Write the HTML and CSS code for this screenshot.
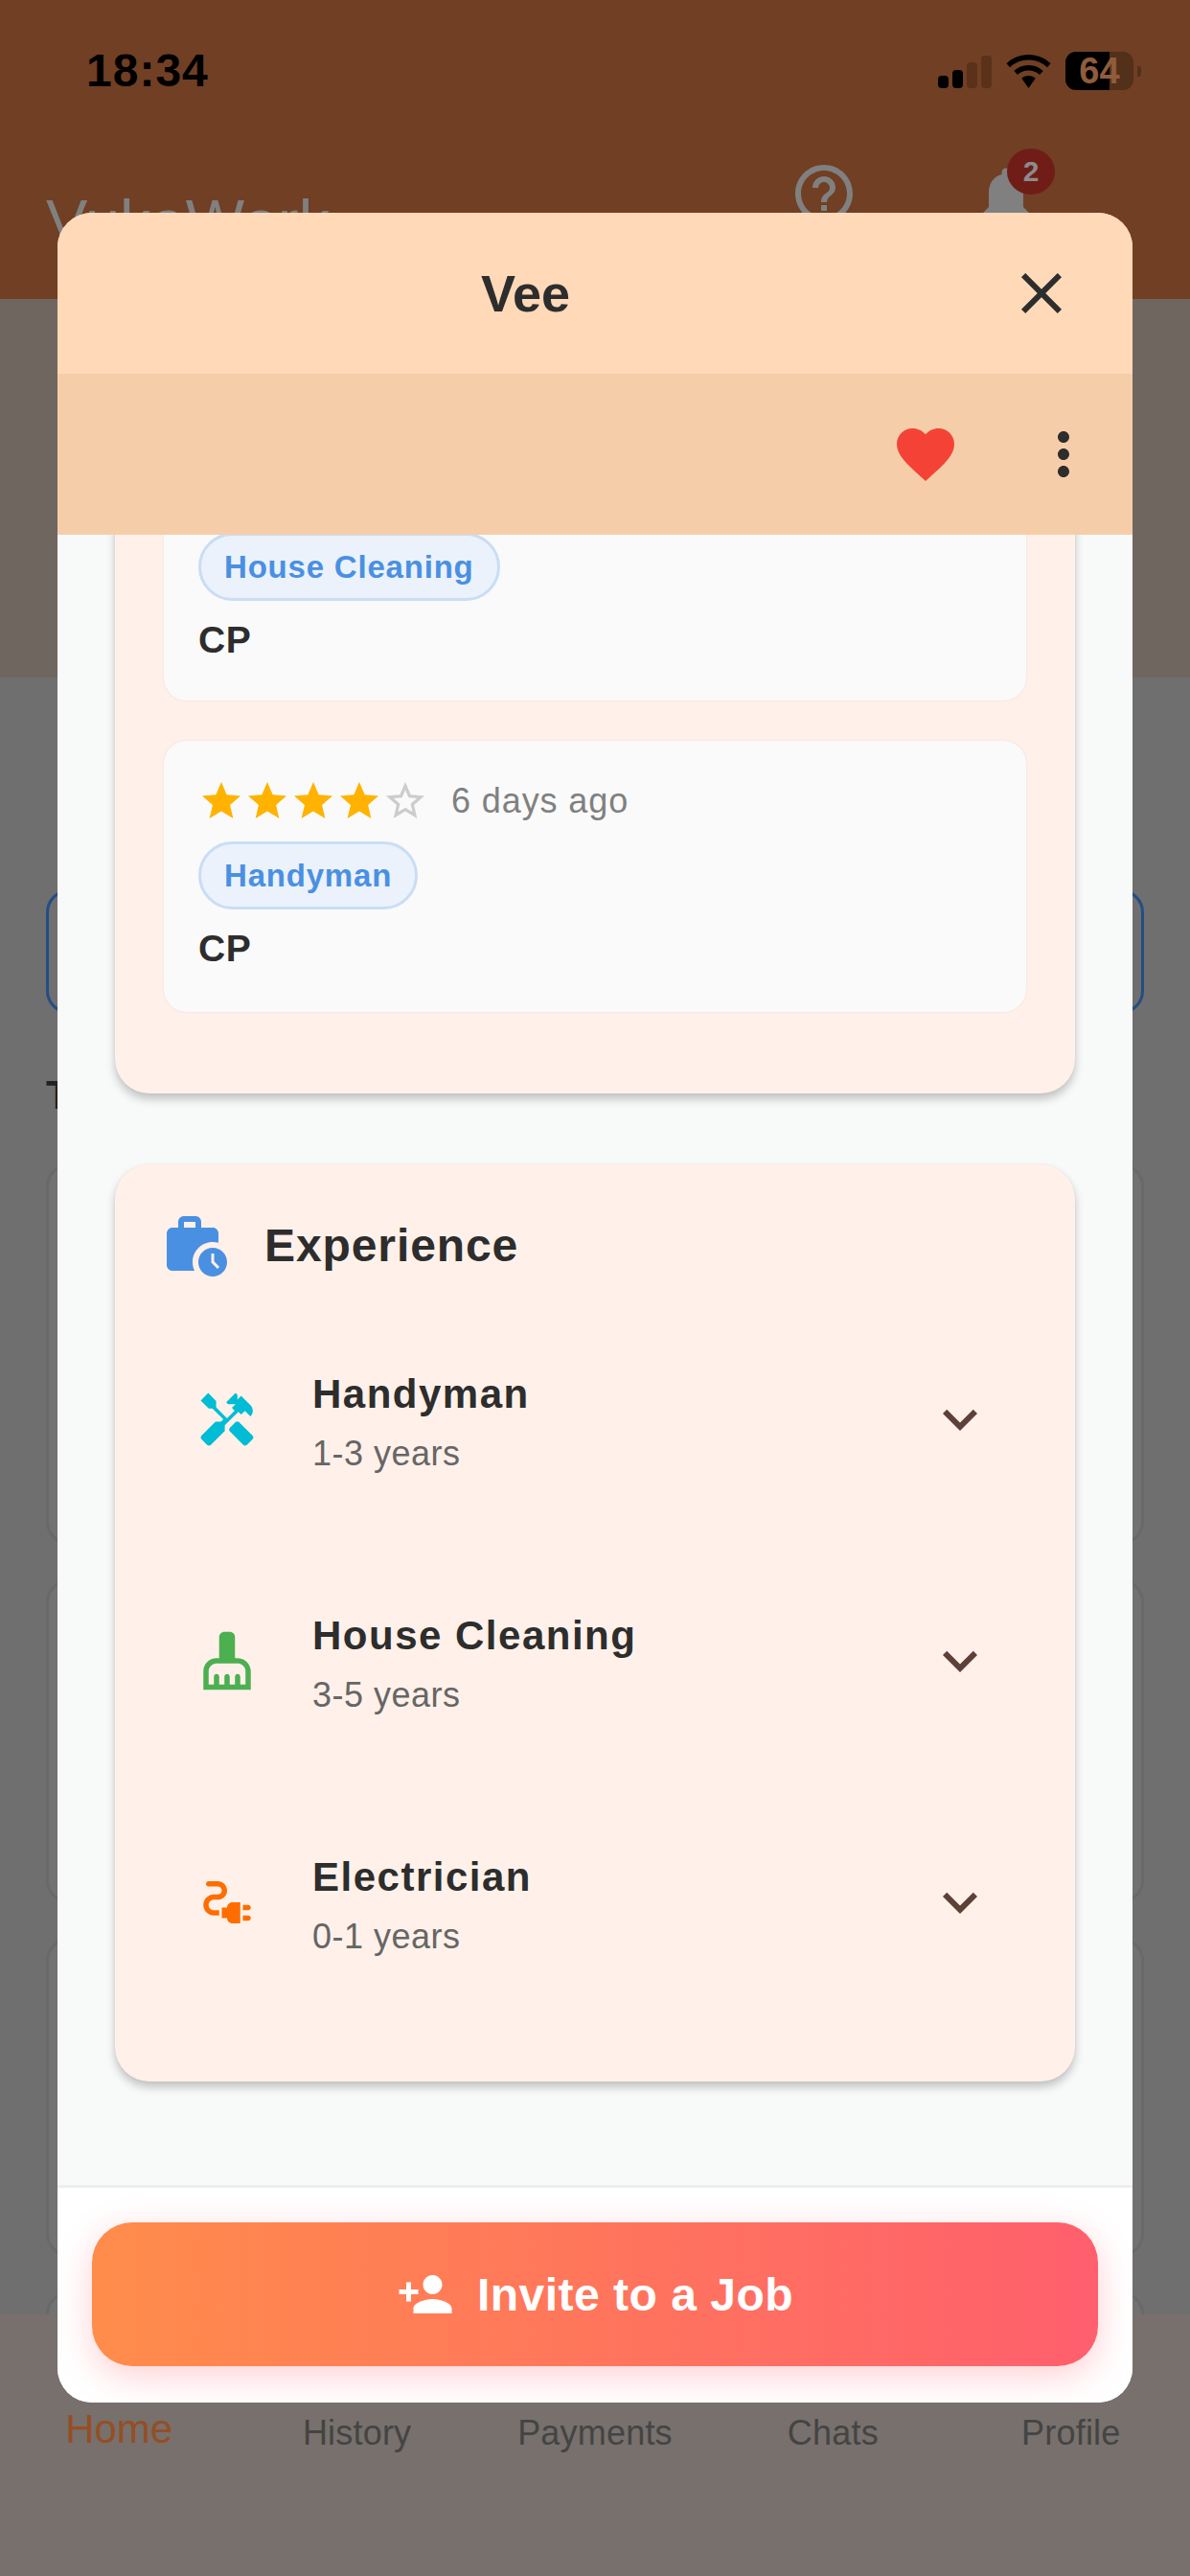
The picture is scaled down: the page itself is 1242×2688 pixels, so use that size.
FILE: index.html
```html
<!DOCTYPE html>
<html lang="en">
<head>
  <meta charset="UTF-8">
  <meta name="viewport" content="width=device-width, initial-scale=1.0">
  <title>Vee</title>
  <link rel="stylesheet" href="styles.css">
</head>
<body>
<div class="screen">
  <!-- the page under the dialog -->
  <header class="app-bar">
    <div class="status-bar">
      <span class="clock">18:34</span>
      <div class="status-icons">
        <div class="signal">
          <span class="bar bar1"></span>
          <span class="bar bar2"></span>
          <span class="bar bar3 off"></span>
          <span class="bar bar4 off"></span>
        </div>
        <svg class="wifi" viewBox="0 0 47 35"><path d="M23.500 0C14.500 0 6.500 3.500 0.500 9.200L4 13.200C9 8.500 16 5.600 23.500 5.600S38 8.500 43 13.200L46.500 9.200C40.500 3.500 32.500 0 23.500 0ZM23.500 11C17.500 11 12.300 13.300 8.300 17L12 21C15 18.200 19 16.600 23.500 16.600S32 18.200 35 21L38.700 17C34.700 13.300 29.500 11 23.500 11ZM23.500 22C20.700 22 18.200 23 16.300 24.800L23.500 35L30.700 24.800C28.800 23 26.300 22 23.500 22Z"/></svg>
        <div class="battery"><span>64</span></div>
        <span class="battery-nub"></span>
      </div>
    </div>
    <div class="toolbar">
      <span class="brand">VukaWork</span>
      <svg class="tool-icon help" viewBox="0 0 24 24"><path d="M11 18h2v-2h-2v2zm1-16C6.480 2 2 6.480 2 12s4.480 10 10 10 10-4.480 10-10S17.520 2 12 2zm0 18c-4.410 0-8-3.590-8-8s3.590-8 8-8 8 3.590 8 8-3.590 8-8 8zm0-14c-2.210 0-4 1.790-4 4h2c0-1.100.9-2 2-2s2 .9 2 2c0 2-3 1.750-3 5h2c0-2.250 3-2.500 3-5 0-2.210-1.790-4-4-4z"/></svg>
      <div class="bell">
        <svg class="tool-icon" viewBox="0 0 24 24"><path d="M12 22c1.100 0 2-.9 2-2h-4c0 1.100.89 2 2 2zm6-6v-5c0-3.070-1.640-5.640-4.500-6.320V4c0-.83-.67-1.500-1.500-1.500s-1.500.67-1.500 1.500v.68C7.630 5.360 6 7.920 6 11v5l-2 2v1h16v-1l-2-2z"/></svg>
        <span class="badge">2</span>
      </div>
    </div>
  </header>
  <div class="banner"></div>
  <main class="content">
    <div class="search-box"></div>
    <div class="content-title">T</div>
    <div class="worker-card h1"></div>
    <div class="worker-card h2"></div>
    <div class="worker-card h3"></div>
    <div class="worker-card h4"></div>
  </main>
  <nav class="bottom-nav">
    <span class="nav-item active">Home</span>
    <span class="nav-item">History</span>
    <span class="nav-item">Payments</span>
    <span class="nav-item">Chats</span>
    <span class="nav-item">Profile</span>
  </nav>

  <!-- worker dialog -->
  <div class="modal">
    <div class="modal-head">
      <h1 class="modal-title">Vee</h1>
      <div class="close-wrap">
        <svg class="icon72 dark" viewBox="0 0 24 24"><path d="M19 6.410L17.590 5 12 10.590 6.410 5 5 6.410 10.590 12 5 17.590 6.410 19 12 13.410 17.590 19 19 17.590 13.410 12z"/></svg>
      </div>
    </div>
    <div class="modal-actions">
      <svg class="icon72 red" viewBox="0 0 24 24"><path d="M12 21.350l-1.450-1.320C5.400 15.360 2 12.280 2 8.500 2 5.420 4.420 3 7.500 3c1.740 0 3.410.81 4.500 2.090C13.090 3.810 14.760 3 16.500 3 19.580 3 22 5.420 22 8.500c0 3.780-3.400 6.860-8.550 11.540L12 21.350z"/></svg>
      <svg class="icon72 dark" viewBox="0 0 24 24"><path d="M12 8c1.100 0 2-.9 2-2s-.9-2-2-2-2 .9-2 2 .9 2 2 2zm0 2c-1.100 0-2 .9-2 2s.9 2 2 2 2-.9 2-2-.9-2-2-2zm0 6c-1.100 0-2 .9-2 2s.9 2 2 2 2-.9 2-2-.9-2-2-2z"/></svg>
    </div>

    <div class="modal-body">
      <section class="panel reviews">
        <div class="review first">
          <span class="chip">House Cleaning</span>
          <div class="review-name">CP</div>
        </div>
        <div class="review">
          <div class="review-top">
            <div class="stars">
              <svg viewBox="0 0 24 24"><path d="M12 17.270L18.180 21l-1.640-7.030L22 9.240l-7.190-.61L12 2 9.190 8.630 2 9.240l5.460 4.730L5.820 21z"/></svg>
              <svg viewBox="0 0 24 24"><path d="M12 17.270L18.180 21l-1.640-7.030L22 9.240l-7.190-.61L12 2 9.190 8.630 2 9.240l5.460 4.730L5.820 21z"/></svg>
              <svg viewBox="0 0 24 24"><path d="M12 17.270L18.180 21l-1.640-7.030L22 9.240l-7.190-.61L12 2 9.190 8.630 2 9.240l5.460 4.730L5.820 21z"/></svg>
              <svg viewBox="0 0 24 24"><path d="M12 17.270L18.180 21l-1.640-7.030L22 9.240l-7.190-.61L12 2 9.190 8.630 2 9.240l5.460 4.730L5.820 21z"/></svg>
              <svg class="empty" viewBox="0 0 24 24"><path d="M22 9.240l-7.190-.62L12 2 9.190 8.630 2 9.240l5.460 4.730L5.820 21 12 17.270 18.180 21l-1.630-7.030L22 9.240zM12 15.400l-3.760 2.270 1-4.280-3.320-2.880 4.380-.38L12 6.100l1.710 4.040 4.380.38-3.320 2.880 1 4.280L12 15.400z"/></svg>
            </div>
            <span class="review-date">6 days ago</span>
          </div>
          <span class="chip">Handyman</span>
          <div class="review-name">CP</div>
        </div>
      </section>

      <section class="panel experience">
        <div class="panel-head">
          <svg class="icon72 blue" viewBox="0 0 24 24"><path d="M18 11c.7 0 1.370.1 2 .29V8c0-1.110-.89-2-2-2h-4V4c0-1.110-.89-2-2-2H8C6.890 2 6 2.890 6 4v2H4c-1.110 0-1.990.89-1.990 2L2 19c0 1.110.89 2 2 2h7.680C11.250 20.090 11 19.080 11 18c0-3.870 3.130-7 7-7zM8 4h4v2H8V4z"/><path d="M18 13c-2.760 0-5 2.240-5 5s2.240 5 5 5 5-2.240 5-5-2.240-5-5-5zm1.650 7.350L17.500 18.200V15h1v2.790l1.850 1.850-.7.71z"/></svg>
          <h2 class="panel-title">Experience</h2>
        </div>
        <div class="exp-row">
          <svg class="exp-icon cyan" viewBox="0 0 24 24"><path d="M21.670 18.170l-5.300-5.300h-.99l-2.540 2.540v.99l5.300 5.300c.39.39 1.020.39 1.410 0l2.120-2.120c.39-.38.39-1.020 0-1.410z"/><path d="M17.340 10.190l1.410-1.410 2.120 2.120c1.170-1.170 1.170-3.070 0-4.240l-3.540-3.540-1.410 1.410V2.710l-.7-.71-3.540 3.540.71.71h2.830l-1.410 1.410 1.060 1.060-2.890 2.890-4.130-4.130V5.060L4.830 2.040 2 4.870 5.030 7.900h1.410l4.130 4.130-.85.85H7.600l-5.300 5.300c-.39.39-.39 1.020 0 1.410l2.120 2.120c.39.39 1.020.39 1.410 0l5.300-5.300v-2.120l5.150-5.150 1.060 1.050z"/></svg>
          <div class="exp-text">
            <div class="exp-name">Handyman</div>
            <div class="exp-years">1-3 years</div>
          </div>
          <svg class="icon72 brown" viewBox="0 0 24 24"><path d="M7.410 8.590L12 13.170l4.590-4.580L18 10l-6 6-6-6 1.410-1.410z"/></svg>
        </div>
        <div class="exp-row">
          <svg class="exp-icon green" viewBox="0 0 24 24"><path d="M16 11h-1V3c0-1.100-.9-2-2-2h-2c-1.100 0-2 .9-2 2v8H8c-2.760 0-5 2.240-5 5v7h18v-7c0-2.760-2.240-5-5-5zm3 10h-2v-3c0-.55-.45-1-1-1s-1 .45-1 1v3h-2v-3c0-.55-.45-1-1-1s-1 .45-1 1v3H9v-3c0-.55-.45-1-1-1s-1 .45-1 1v3H5v-5c0-1.650 1.350-3 3-3h8c1.650 0 3 1.350 3 3v5z"/></svg>
          <div class="exp-text">
            <div class="exp-name">House Cleaning</div>
            <div class="exp-years">3-5 years</div>
          </div>
          <svg class="icon72 brown" viewBox="0 0 24 24"><path d="M7.410 8.590L12 13.170l4.590-4.580L18 10l-6 6-6-6 1.410-1.410z"/></svg>
        </div>
        <div class="exp-row">
          <svg class="exp-icon orange" viewBox="0 0 24 24"><path d="M21 14c0-.55-.45-1-1-1h-2v2h2c.55 0 1-.45 1-1z"/><path d="M20 17h-2v2h2c.55 0 1-.45 1-1s-.45-1-1-1z"/><path d="M12 14h-2v4h2c0 1.100.9 2 2 2h3v-8h-3c-1.100 0-2 .9-2 2z"/><path d="M5 13c0-1.100.9-2 2-2h1.500c1.930 0 3.500-1.570 3.500-3.500S10.430 4 8.500 4H5c-.55 0-1 .45-1 1s.45 1 1 1h3.500c.83 0 1.500.67 1.500 1.500S9.330 9 8.500 9H7c-2.210 0-4 1.790-4 4s1.790 4 4 4h2v-2H7c-1.100 0-2-.9-2-2z"/></svg>
          <div class="exp-text">
            <div class="exp-name">Electrician</div>
            <div class="exp-years">0-1 years</div>
          </div>
          <svg class="icon72 brown" viewBox="0 0 24 24"><path d="M7.410 8.590L12 13.170l4.590-4.580L18 10l-6 6-6-6 1.410-1.410z"/></svg>
        </div>
      </section>
    </div>

    <div class="modal-foot">
      <button class="invite-btn">
        <svg class="invite-icon" viewBox="0 0 24 24"><path d="M15 12c2.210 0 4-1.790 4-4s-1.790-4-4-4-4 1.790-4 4 1.790 4 4 4zm-9-2V7H4v3H1v2h3v3h2v-3h3v-2H6zm9 4c-2.670 0-8 1.340-8 4v2h16v-2c0-2.660-5.330-4-8-4z"/></svg>
        Invite to a Job
      </button>
    </div>
  </div>
</div>
</body>
</html>
```

FILE: styles.css
```css
* { box-sizing: border-box; }
html, body { margin: 0; padding: 0; }
body { font-family: "Liberation Sans", Arial, sans-serif; }
h1, h2 { margin: 0; }
svg { display: block; flex: none; fill: currentColor; }

.screen { position: relative; width: 1242px; height: 2688px; overflow: hidden; background: #77706c; }

/* page under the dialog */
.app-bar { height: 312px; background: #703f24; }
.status-bar { display: flex; justify-content: space-between; align-items: center; height: 94px; padding: 54px 51px 0 90px; color: #000; }
.clock { font-size: 48px; font-weight: 700; line-height: 40px; letter-spacing: 1px; }
.status-icons { display: flex; align-items: center; }
.signal { display: flex; align-items: flex-end; gap: 4px; height: 35px; margin-right: 15px; }
.bar { width: 11px; background: #000; border-radius: 4px; }
.bar1 { height: 13px; }
.bar2 { height: 19px; }
.bar3 { height: 27px; }
.bar4 { height: 34px; }
.bar.off { background: #5b3219; }
.wifi { width: 47px; height: 35px; margin-right: 15px; color: #000; }
.battery { width: 71px; height: 40px; border-radius: 11px; background: linear-gradient(90deg, #000 65%, #52301a 65%); color: #8f5c3c; font-size: 38px; font-weight: 700; line-height: 40px; text-align: center; }
.battery-nub { width: 4px; height: 11px; margin-left: 4px; background: #52301a; border-radius: 0 3px 3px 0; }

.toolbar { display: flex; align-items: center; height: 72px; margin-top: 74px; padding-left: 48px; color: #808080; }
.brand { flex: 1; margin-top: 56px; font-size: 65px; line-height: 72px; }
.tool-icon { width: 72px; height: 72px; }
.help { margin-right: 118px; margin-top: -4px; }
.bell { position: relative; margin-right: 156px; }
.badge { position: absolute; top: -13px; left: 37px; width: 50px; height: 48px; border-radius: 50%; background: #701d18; color: #8c8c8c; font-size: 30px; font-weight: 700; line-height: 48px; text-align: center; }

.banner { height: 395px; background: #706660; }
.content { height: 1708px; padding: 221px 48px 0; background: #6f6f6f; overflow: hidden; }
.search-box { height: 130px; border: 3px solid #234e85; border-radius: 24px; }
.content-title { margin-top: 59px; font-size: 42px; font-weight: 700; line-height: 51px; color: #222; }
.worker-card { margin-bottom: 36px; border: 3px solid #696969; border-radius: 24px; background: #727272; }
.worker-card.h1 { height: 398px; margin-top: 46px; }
.worker-card.h2 { height: 338px; }
.worker-card.h3 { height: 333px; }
.worker-card.h4 { height: 300px; }

.bottom-nav { display: grid; grid-template-columns: repeat(5, 1fr); height: 273px; padding-top: 102px; }
.nav-item { font-size: 36px; line-height: 44px; letter-spacing: .2px; text-align: center; color: #444; }
.nav-item.active { font-size: 42px; line-height: 44px; letter-spacing: 0; margin-top: -4px; color: #954e25; }

/* dialog */
.modal { position: absolute; left: 60px; top: 222px; width: 1122px; height: 2285px; display: flex; flex-direction: column; border-radius: 36px; overflow: hidden; background: #fff; }
.modal-head { display: flex; align-items: center; flex: none; height: 168px; background: #ffd9b8; color: #2d2d2d; }
.modal-title { flex: 1; font-size: 54px; font-weight: 700; text-align: center; }
.close-wrap { display: flex; justify-content: flex-end; width: 145px; padding-right: 59px; }
.modal-actions { display: flex; justify-content: flex-end; align-items: center; gap: 72px; flex: none; height: 168px; padding-right: 36px; background: #f5cea9; }

.icon72 { width: 72px; height: 72px; }
.dark { color: #2d2d2d; }
.red { color: #f44336; }
.blue { color: #4a90e2; }
.brown { color: #5d4037; }
.cyan { color: #00bcd4; }
.green { color: #4caf50; }
.orange { color: #ff6d00; }

.modal-body { flex: 1; min-height: 0; overflow: hidden; background: #f8faf9; border-bottom: 3px solid #eee; padding: 0 60px; }
.panel { border-radius: 36px; background: #fff1e9; box-shadow: 0 6px 10px rgba(0, 0, 0, .22), 0 0 3px rgba(0, 0, 0, .06); }
.reviews { margin-top: -160px; padding: 50px 51px 85px; }
.review { height: 283px; padding: 39px 36px 0; border-radius: 24px; background: #fafafa; box-shadow: 0 0 3px rgba(0, 0, 0, .08); }
.review + .review { margin-top: 42px; }
.review.first { padding-top: 108px; }
.review-top { display: flex; align-items: center; margin-bottom: 18px; }
.stars { display: flex; color: #ffb300; }
.stars svg { width: 48px; height: 48px; }
.stars .empty { color: #ccc; }
.review-date { margin-left: 24px; font-size: 36px; letter-spacing: .9px; color: #808080; }
.chip { display: inline-block; height: 71px; padding: 0 24px; border: 3px solid #c9ddf5; border-radius: 36px; background: #ebf2fb; color: #4a90e2; font-size: 33px; font-weight: 700; line-height: 65px; letter-spacing: .8px; vertical-align: top; }
.review-name { margin-top: 11px; font-size: 39px; font-weight: 700; line-height: 60px; letter-spacing: .5px; color: #2d2d2d; }

.experience { margin-top: 74px; padding: 48px 84px 61px; }
.panel-head { display: flex; align-items: center; gap: 36px; margin: 0 0 20px -36px; color: #2d2d2d; }
.panel-title { font-size: 48px; font-weight: 700; letter-spacing: .9px; }
.exp-row { display: flex; align-items: center; height: 252px; }
.exp-icon { width: 66px; height: 66px; margin-right: 56px; }
.exp-text { flex: 1; margin-top: 6px; }
.exp-name { font-size: 42px; font-weight: 700; line-height: 50px; letter-spacing: 1.5px; color: #2d2d2d; }
.exp-years { margin-top: 15px; font-size: 36px; line-height: 44px; letter-spacing: .5px; color: #666; }

.modal-foot { flex: none; height: 224px; padding: 36px 36px 0; background: #fff; }
.invite-btn { display: flex; justify-content: center; align-items: center; gap: 24px; width: 100%; height: 150px; border: 0; border-radius: 42px; background: linear-gradient(90deg, #ff8c4b, #ff5f6d); box-shadow: 0 10px 36px rgba(255, 95, 109, .3); color: #fff; font-family: inherit; font-size: 48px; font-weight: 700; letter-spacing: .5px; }
.invite-icon { width: 60px; height: 60px; }
```
